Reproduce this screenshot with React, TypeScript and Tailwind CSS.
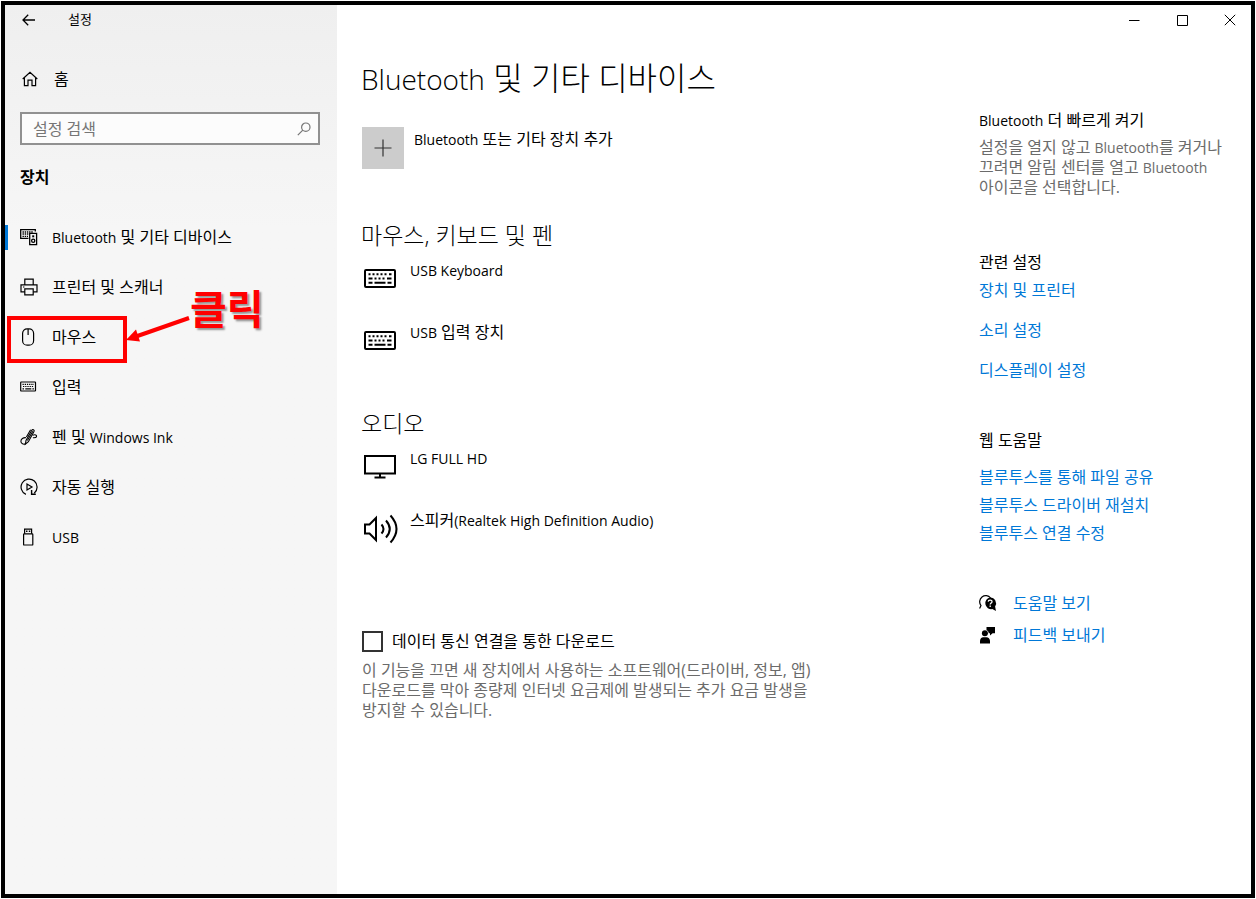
import React from 'react';

type IconProps = { className?: string };

// Latin letters run large next to Hangul, so they are set one step smaller
function En({ children }: { children: React.ReactNode }) {
  return <span className="text-[0.875em] leading-none">{children}</span>;
}

function BackIcon() {
  return (
    <svg width="14" height="12" viewBox="0 0 14 12" fill="none" stroke="currentColor" strokeWidth="1.3">
      <path d="M13 6H1M6.2 .8 1 6l5.2 5.2" />
    </svg>
  );
}

function HomeIcon() {
  return (
    <svg width="16" height="16" viewBox="0 0 16 16" fill="none" stroke="currentColor" strokeWidth="1.2">
      <path d="M.7 8 8 1.3 15.3 8M2.4 6.6v8H6V9.2h4v5.4h3.6v-8" />
    </svg>
  );
}

function SearchIcon() {
  return (
    <svg width="14" height="14" viewBox="0 0 14 14" fill="none" stroke="currentColor" strokeWidth="1.2">
      <circle cx="8.8" cy="5.2" r="4.2" />
      <path d="M5.8 8.2.8 13.2" />
    </svg>
  );
}

function DevicesIcon() {
  return (
    <svg width="18" height="18" viewBox="0 0 18 18" fill="none" stroke="currentColor" strokeWidth="1.3">
      <path d="M8.5 10.4H.7V1.6h14.6v2" />
      <path d="M2.5 4h11M2.5 6h6M2.5 8.3h5.5" strokeDasharray="1.4 .8" />
      <path d="M9.7 5.3h6.9v11.4H9.7z" />
      <circle cx="13.2" cy="12.8" r="1.6" />
      <path d="M12.2 8.3h2" strokeWidth="2" />
    </svg>
  );
}

function PrinterIcon() {
  return (
    <svg width="18" height="18" viewBox="0 0 18 18" fill="none" stroke="currentColor" strokeWidth="1.2">
      <path d="M4.8 6.8V1.2h8.4v5.6M4.8 13.8H1V6.8h16v7h-3.8" />
      <path d="M4.8 10.8h8.4v6H4.8z" />
      <path d="M3 9h1.4" />
    </svg>
  );
}

function MouseIcon() {
  return (
    <svg width="18" height="18" viewBox="0 0 18 18" fill="none" stroke="currentColor" strokeWidth="1.2">
      <rect x="2.6" y=".8" width="11" height="16.4" rx="4.5" />
      <path d="M8.1 1v6" />
    </svg>
  );
}

function TypingIcon() {
  return (
    <svg width="18" height="18" viewBox="0 0 18 18" fill="none" stroke="currentColor" strokeWidth="1.2">
      <rect x=".7" y="4" width="14.8" height="9" rx=".5" />
      <path d="M2.5 6.3h11.500M3 8.500h11" strokeDasharray="1.3 .9" />
      <path d="M2.500 10.900h1.500M5.300 10.900h6M12.400 10.900h1.500" />
    </svg>
  );
}

function PenIcon() {
  return (
    <svg width="18" height="18" viewBox="0 0 18 18" fill="none" stroke="currentColor" strokeWidth="1.1">
      <path d="M5.400 16.200 6 12.400 11.800 2.200c.8-1.300 3-.2 2.200 1.300L8.400 13.700z" />
      <path d="M10.600 1.800 6.400 9M12.800 3.200 7.400 12.600" />
      <path d="M5.900 9.600C3.200 9.400.9 11 .9 13.300c0 2.400 2.700 3.600 4.500 2.500M12.600 7.200c2.800-1.200 4.400.2 3.900 1.500-.6 1.500-2.600.9-3.600 1.100" />
    </svg>
  );
}

function AutoPlayIcon() {
  return (
    <svg width="18" height="18" viewBox="0 0 18 18" fill="none" stroke="currentColor" strokeWidth="1.200">
      <path d="M5.900 16.400A8 8 0 1 1 14.200 15.200" />
      <path d="M7 6v6l5-3z" />
      <path d="M15.800 16.300h-4.200v-4.200" strokeWidth="1.400" />
    </svg>
  );
}

function UsbIcon() {
  return (
    <svg width="18" height="18" viewBox="0 0 18 18" fill="none" stroke="currentColor" strokeWidth="1.200">
      <path d="M4.600 5.800V1.100h7v4.700" />
      <rect x="3.600" y="5.800" width="9.200" height="11.200" rx=".6" />
      <path d="M6 3.200h1.500M8.800 3.200h1.500" strokeWidth="1.500" />
    </svg>
  );
}

function KeyboardIcon() {
  return (
    <svg width="32" height="20" viewBox="0 0 32 20" fill="none" stroke="currentColor" strokeWidth="2">
      <rect x="1" y="1" width="30" height="17" rx="1" />
      <path d="M4.500 5.200h2M8.500 5.200h2M12.500 5.200h2M16.500 5.200h2M20.500 5.200h2M25 5.200h2.500" />
      <path d="M4.500 9.500h4M10.500 9.500h2M14.500 9.500h2M18.500 9.500h2M23 9.500h4.500" />
      <path d="M4.500 13.700h4M10.500 13.700h11M23.500 13.700h4" />
    </svg>
  );
}

function MonitorIcon() {
  return (
    <svg width="32" height="24" viewBox="0 0 32 24" fill="none" stroke="currentColor" strokeWidth="2">
      <path d="M1 1h30v17.500H1zM16 18.500v4M10.500 22.500h11" />
    </svg>
  );
}

function SpeakerIcon() {
  return (
    <svg width="34" height="30" viewBox="0 0 34 30" fill="none" stroke="currentColor" strokeWidth="2">
      <path d="M1 10.500v9h4.500l6.500 6.500V4L5.500 10.500z" />
      <path d="M17.500 10.500q4 4.500 0 9M22 6.500q7.500 8.500 0 17M26.500 1.500q12 13.500 0 27" />
    </svg>
  );
}

function HelpIcon({ className }: IconProps) {
  return (
    <svg className={className} width="18" height="18" viewBox="0 0 18 18" fill="none">
      <path d="M.6 14.400 2 11.600A5.600 5.600 0 1 1 11.600 4" stroke="currentColor" strokeWidth="1.200" />
      <path d="M11.200 3.400a5.900 5.900 0 0 1 4.900 9.100l.9 4.500-3.700-1.900a5.900 5.900 0 1 1-2.100-11.700z" fill="currentColor" />
      <path d="M9.200 7.600c.2-2.200 4-2 3.800.2-.1 1.300-1.800 1.300-1.800 2.800M11.200 11.600v1.400" stroke="#fff" strokeWidth="1.300" />
    </svg>
  );
}

function FeedbackIcon({ className }: IconProps) {
  return (
    <svg className={className} width="18" height="18" viewBox="0 0 18 18" fill="currentColor">
      <path d="M7.500 1H16v6.200h-2.400L11 9.500V7.200H9.800A4 4 0 0 0 7.500 4z" />
      <circle cx="5.900" cy="7.200" r="3" />
      <path d="M1 17.500V15c0-2.300 1.500-3.800 3.200-3.800h3.300c1.800 0 3.500 1.500 3.500 3.800v2.500z" />
    </svg>
  );
}

type NavItem = { label: React.ReactNode; icon: React.ReactNode; active?: boolean; marked?: boolean };

const navItems: NavItem[] = [
  { label: <><En>Bluetooth</En> 및 기타 디바이스</>, icon: <DevicesIcon />, active: true },
  { label: '프린터 및 스캐너', icon: <PrinterIcon /> },
  { label: '마우스', icon: <MouseIcon />, marked: true },
  { label: '입력', icon: <TypingIcon /> },
  { label: <>펜 및 <En>Windows Ink</En></>, icon: <PenIcon /> },
  { label: '자동 실행', icon: <AutoPlayIcon /> },
  { label: <En>USB</En>, icon: <UsbIcon /> },
];

// Red frame, arrow and caption drawn over the mouse entry
function ClickMark() {
  return (
    <div className="absolute inset-0 pointer-events-none">
      <div className="absolute left-[2px] top-1 w-[120px] h-[47px] border-4 border-[#ff0000]" />
      <svg className="absolute left-[121px] top-0 overflow-visible" width="66" height="34" viewBox="0 0 66 34">
        <path d="M63 6 10 24.500" stroke="#ff0000" strokeWidth="4" />
        <path d="M0 28 10 17.500 14 29.500z" fill="#ff0000" />
      </svg>
      <span className="absolute left-[185px] -top-7 text-[40px] leading-[50px] font-bold text-[#ff0000] whitespace-nowrap [text-shadow:2px_2px_2px_rgba(0,0,0,0.4)]">
        클릭
      </span>
    </div>
  );
}

function Sidebar() {
  return (
    <aside className="w-[332px] shrink-0 bg-linear-to-b from-[#efefef] to-[#f6f6f6] to-25%">
      <div className="flex items-center h-[30px] pl-[17px]">
        <button aria-label="뒤로" className="w-[46px]">
          <BackIcon />
        </button>
        <span className="text-[13px]">설정</span>
      </div>

      <a href="#home" className="flex items-center h-10 mt-6 pl-[17px] gap-4">
        <HomeIcon />
        <span>홈</span>
      </a>

      <label className="flex items-center h-[33px] mt-[13px] mr-[17px] ml-[15px] pl-[11px] pr-[7px] border-2 border-[#919191] bg-[#fcfcfc] text-[#767676]">
        <input
          type="text"
          aria-label="설정 검색"
          placeholder="설정 검색"
          className="flex-1 min-w-0 bg-transparent outline-none placeholder:text-[#767676]"
        />
        <SearchIcon />
      </label>

      <h2 className="mt-5 pl-[15px] leading-6 font-bold">장치</h2>

      <nav className="mt-[23px]">
        {navItems.map((item, i) => (
          <div key={i} className="relative">
            <a href="#device" className="flex items-center h-[50px] pl-[15px] gap-[14px]">
              {item.active && <span className="absolute left-0 w-[3px] h-[25px] bg-[#0078d7]" />}
              {item.icon}
              <span>{item.label}</span>
            </a>
            {item.marked && <ClickMark />}
          </div>
        ))}
      </nav>
    </aside>
  );
}

function Device({ icon, children }: { icon: React.ReactNode; children: React.ReactNode }) {
  return (
    <div className="flex h-[62px] pl-[3px]">
      <div className="flex items-center w-[46px] h-[42px]">{icon}</div>
      <span className="leading-6">{children}</span>
    </div>
  );
}

function Devices() {
  return (
    <div className="flex-1 min-w-0 max-w-[460px]">
      <h1 className="text-[32px] leading-10 font-light whitespace-nowrap">
        <En>Bluetooth</En> 및 기타 디바이스
      </h1>

      <button className="flex items-start gap-[10px] mt-[29px] pl-px text-left">
        <span className="flex items-center justify-center size-[42px] bg-[#cccccc]">
          <svg width="18" height="18" viewBox="0 0 18 18" stroke="#333" strokeWidth="1.200">
            <path d="M9 .5v17M.5 9h17" />
          </svg>
        </span>
        <span className="leading-6">
          <En>Bluetooth</En> 또는 기타 장치 추가
        </span>
      </button>

      <h2 className="mt-[50px] text-[23px] leading-8 font-light">마우스, 키보드 및 펜</h2>
      <div className="mt-[7px]">
        <Device icon={<KeyboardIcon />}><En>USB Keyboard</En></Device>
        <Device icon={<KeyboardIcon />}><En>USB</En> 입력 장치</Device>
      </div>

      <h2 className="mt-[25px] text-[23px] leading-8 font-light">오디오</h2>
      <div className="mt-[7px]">
        <Device icon={<MonitorIcon />}><En>LG FULL HD</En></Device>
        <Device icon={<SpeakerIcon />}>스피커<En>(Realtek High Definition Audio)</En></Device>
      </div>

      <label className="flex items-center gap-[9px] mt-[59px] pl-px leading-6">
        <input
          type="checkbox"
          className="appearance-none size-[21px] border-2 border-[#333] bg-white checked:bg-[#0078d7]"
        />
        데이터 통신 연결을 통한 다운로드
      </label>
      <p className="mt-[7px] pl-px leading-5 text-[#6b6b6b] break-keep">
        이 기능을 끄면 새 장치에서 사용하는 소프트웨어(드라이버, 정보, 앱) 다운로드를 막아 종량제 인터넷 요금제에
        발생되는 추가 요금 발생을 방지할 수 있습니다.
      </p>
    </div>
  );
}

const link = 'text-[#0078d7] hover:text-[#6b6b6b]';

function Related() {
  return (
    <div className="w-[272px] shrink-0 pr-5 pt-[50px]">
      <h3 className="leading-6"><En>Bluetooth</En> 더 빠르게 켜기</h3>
      <p className="mt-[5px] leading-5 text-[#6b6b6b] break-keep">
        설정을 열지 않고 <En>Bluetooth</En>를 켜거나 끄려면 알림 센터를 열고 <En>Bluetooth</En> 아이콘을 선택합니다.
      </p>

      <h3 className="mt-[53px] leading-6">관련 설정</h3>
      <div className="flex flex-col items-start gap-4 mt-1 leading-6">
        <a href="#printers" className={link}>장치 및 프린터</a>
        <a href="#sound" className={link}>소리 설정</a>
        <a href="#display" className={link}>디스플레이 설정</a>
      </div>

      <h3 className="mt-[46px] leading-6">웹 도움말</h3>
      <div className="flex flex-col items-start gap-1 mt-[13px] leading-6">
        <a href="#share" className={link}>블루투스를 통해 파일 공유</a>
        <a href="#driver" className={link}>블루투스 드라이버 재설치</a>
        <a href="#fix" className={link}>블루투스 연결 수정</a>
      </div>

      <div className="flex flex-col items-start gap-2 mt-[46px] leading-6">
        <a href="#help" className={`flex items-center gap-4 ${link}`}>
          <HelpIcon className="text-black" />
          도움말 보기
        </a>
        <a href="#feedback" className={`flex items-center gap-4 ${link}`}>
          <FeedbackIcon className="text-black" />
          피드백 보내기
        </a>
      </div>
    </div>
  );
}

function WindowControls() {
  return (
    <div className="flex items-center justify-end gap-9 h-[30px] pr-[15px]">
      <button aria-label="최소화">
        <svg width="12" height="12" viewBox="0 0 12 12" stroke="currentColor">
          <path d="M1 6.500h10.500" />
        </svg>
      </button>
      <button aria-label="최대화">
        <svg width="12" height="12" viewBox="0 0 12 12" fill="none" stroke="currentColor">
          <path d="M1.500 1.500h10v10h-10z" />
        </svg>
      </button>
      <button aria-label="닫기">
        <svg width="12" height="12" viewBox="0 0 12 12" stroke="currentColor">
          <path d="m.8.8 10.400 10.400M11.200.8.8 11.200" />
        </svg>
      </button>
    </div>
  );
}

export default function App() {
  return (
    <div className="min-h-screen flex p-px bg-white text-black text-[16px] font-['Open_Sans','Noto_Sans_CJK_KR',sans-serif]">
      <div className="flex-1 flex border-4 border-black">
        <Sidebar />
        <main className="flex-1 min-w-0">
          <WindowControls />
          <div className="flex justify-between pt-[23px] pl-6">
            <Devices />
            <Related />
          </div>
        </main>
      </div>
    </div>
  );
}
